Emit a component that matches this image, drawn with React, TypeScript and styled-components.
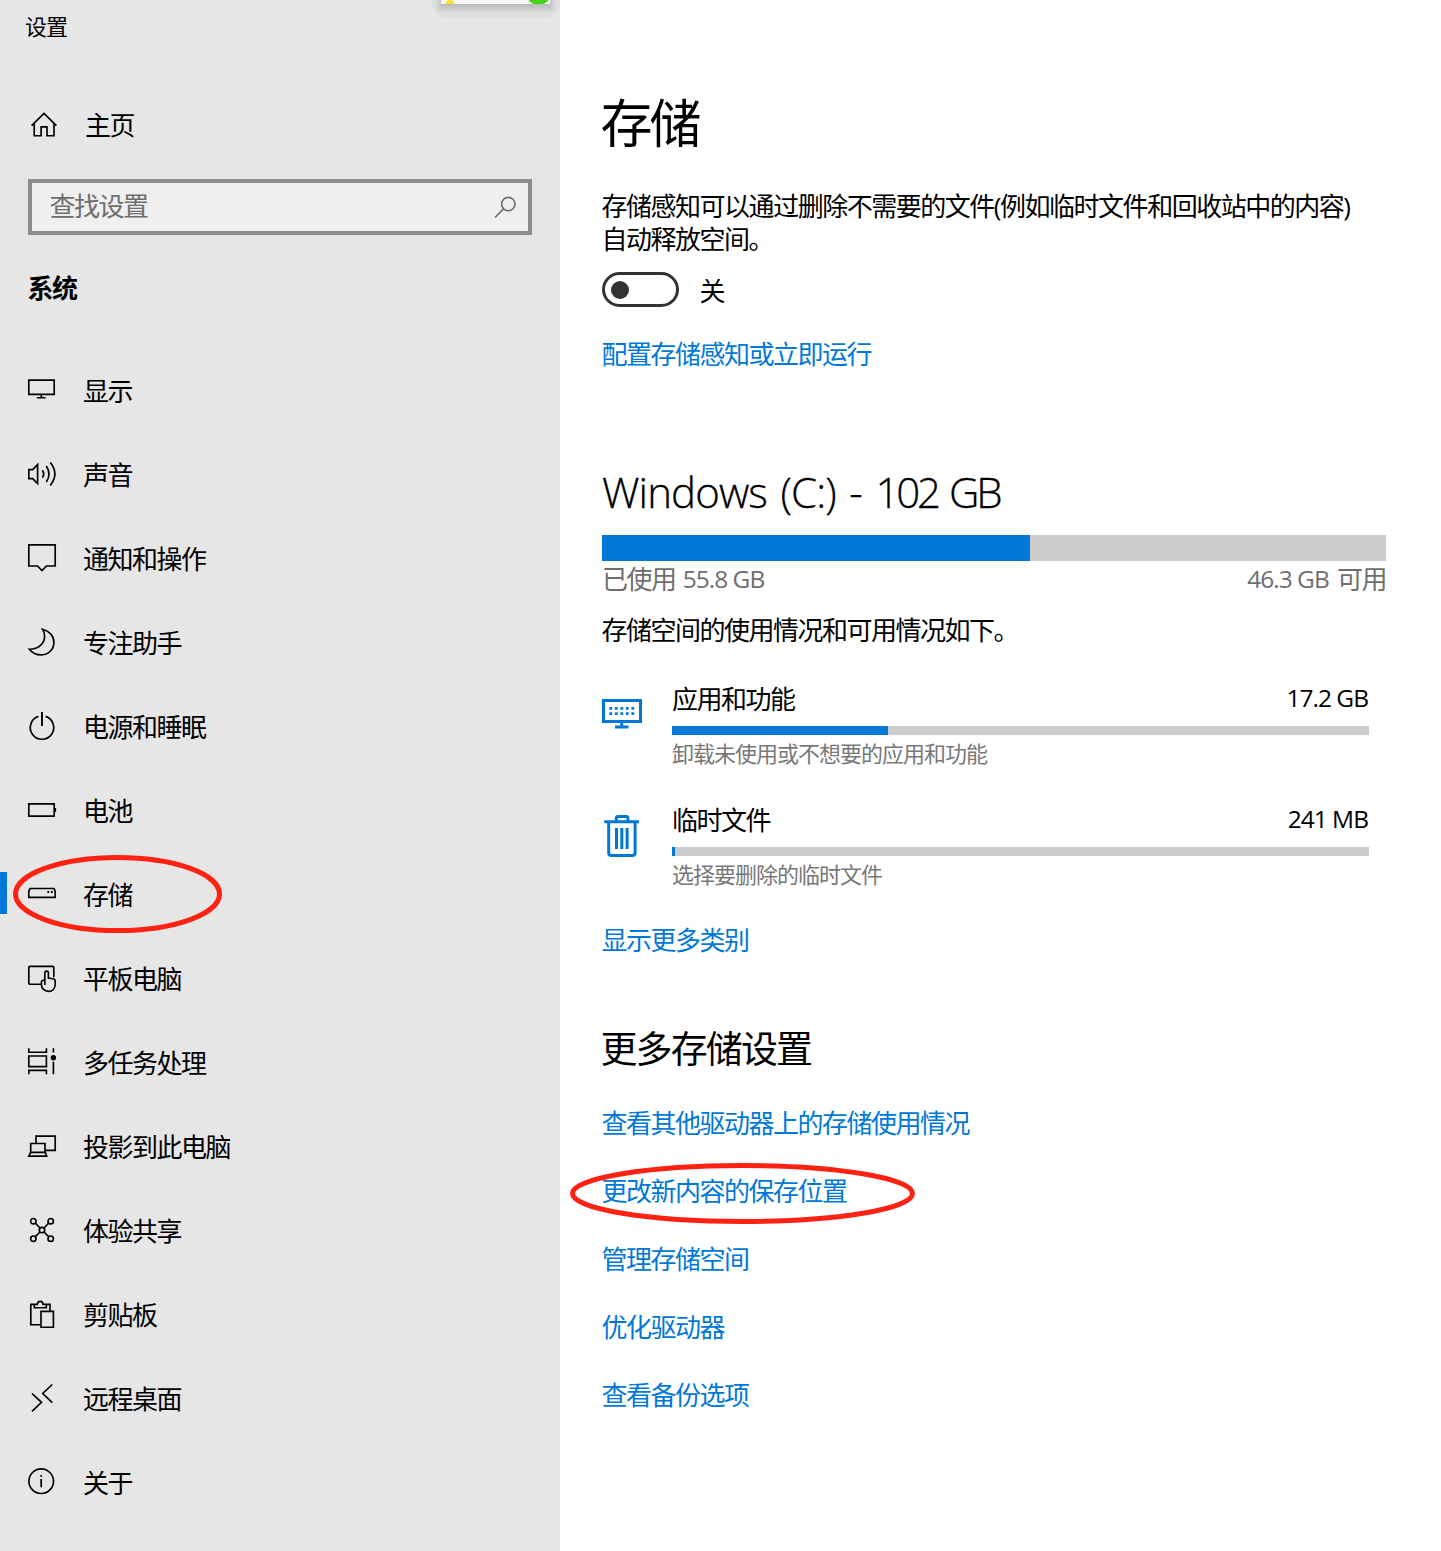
import React from "react";
import styled, { createGlobalStyle } from "styled-components";

const ACCENT = "#0078d7";
const MARK = "#ff2112";

const GlobalStyle = createGlobalStyle`
  *, *::before, *::after { box-sizing: border-box; }
  body {
    margin: 0;
    background: #fff;
    color: #000;
    font-family: "Open Sans", "Noto Sans CJK SC", sans-serif;
    -webkit-font-smoothing: antialiased;
  }
`;

/* ---------- shared text ---------- */

const Text = styled.span<{ $tone?: string }>`
  display: block;
  font-size: 26px;
  line-height: 34px;
  letter-spacing: -1.5px;
  white-space: nowrap;
  color: ${(p) => p.$tone ?? "#000"};
`;

const Latin = styled.span<{ $before?: number; $after?: number; $raise?: number }>`
  margin: 0 ${(p) => p.$after ?? 0}px 0 ${(p) => p.$before ?? 0}px;
  font-size: 24.5px;
  line-height: 1;
  letter-spacing: -1px;
  vertical-align: ${(p) => p.$raise ?? 1}px;
`;

/* ---------- layout ---------- */

const Page = styled.div`
  position: relative;
  display: grid;
  grid-template-columns: 560px 1fr;
  width: 1441px;
  height: 1551px;
  overflow: hidden;
`;

const Sidebar = styled.aside`
  position: relative;
  display: flex;
  flex-direction: column;
  background: #e6e6e6;
  overflow: hidden;
`;

const WindowTitle = styled.div`
  padding: 11px 0 0 25px;
  font-size: 22px;
  line-height: 30px;
  letter-spacing: -1px;
`;

const HomeRow = styled.div`
  display: flex;
  align-items: center;
  gap: 27px;
  height: 56px;
  margin-top: 56px;
  padding-left: 30px;
`;

const SearchBox = styled.div`
  display: flex;
  align-items: center;
  justify-content: space-between;
  width: 504px;
  height: 56px;
  margin: 26px 0 0 28px;
  padding: 0 10px 0 17.5px;
  background: #efefef;
  border: 4px solid #8e8e8e;

  span { padding-bottom: 2px; }
`;

const GroupTitle = styled.h2`
  margin: 36px 0 44px 27.5px;
  font-size: 26px;
  line-height: 34px;
  letter-spacing: -1.5px;
  font-weight: 700;
`;

const Nav = styled.nav`
  display: flex;
  flex-direction: column;
`;

const NavRow = styled.div`
  display: flex;
  align-items: center;
  height: 84px;
`;

const Marker = styled.i<{ $on: boolean }>`
  width: 7px;
  height: 42px;
  margin: 0 21px 4px 0;
  background: ${(p) => (p.$on ? ACCENT : "transparent")};
`;

const IconSvg = styled.svg`
  flex: none;
  fill: none;
  stroke: #000;
  stroke-width: 1.65;
  overflow: visible;
`;

const NavIcon = styled(IconSvg)`
  margin: 0 27px 2px 0;
`;

/* ---------- preview window peeking in from the top edge ---------- */

const PeekShade = styled.div`
  position: absolute;
  top: -22px;
  left: 431px;
  width: 130px;
  height: 40px;
  padding: 0 11px 14px 10px;
  border-radius: 0 0 18px 18px;
  background: #dedede;
`;

const Peek = styled.div`
  position: relative;
  height: 26px;
  background: #f6f6f4;
  box-shadow: 0 1px 1px #b8b8b8, 0 3px 4px 3px rgba(0, 0, 0, 0.12);
`;

const PeekArt = styled.svg`
  position: absolute;
  left: 0;
  bottom: 0;
`;

/* ---------- content ---------- */

const Content = styled.main`
  display: flex;
  flex-direction: column;
  align-items: flex-start;
  padding-left: 42px;
`;

const PageTitle = styled.h1`
  margin: 90px 0 0 -1.5px;
  font-size: 52px;
  line-height: 66px;
  letter-spacing: -3px;
  font-weight: 400;
`;

const Description = styled.p`
  margin: 34px 0 0 -0.5px;
  font-size: 26px;
  line-height: 33px;
  letter-spacing: -1.48px;
  white-space: nowrap;
`;

const ToggleRow = styled.div`
  display: flex;
  align-items: center;
  gap: 20.5px;
  margin-top: 16px;
  height: 35px;

  > span { padding-top: 2px; }
`;

const Toggle = styled.div`
  display: flex;
  align-items: center;
  width: 77px;
  height: 35px;
  padding-left: 6px;
  border: 3.5px solid #333;
  border-radius: 18px;
`;

const Knob = styled.i`
  width: 18px;
  height: 18px;
  border-radius: 50%;
  background: #333;
`;

const LinkText = styled.a<{ $top: number }>`
  display: block;
  margin: ${(p) => p.$top}px 0 0 -0.5px;
  font-size: 26px;
  line-height: 34px;
  letter-spacing: -1.5px;
  white-space: nowrap;
  color: ${ACCENT};
`;

const DriveTitle = styled.h2`
  margin: 92px 0 0;
  font-size: 42px;
  line-height: 58px;
  font-weight: 300;
  letter-spacing: -0.9px;
  word-spacing: 3.5px;
  white-space: nowrap;
  -webkit-text-stroke: 0.3px #000;
`;

const DriveSize = styled.span`
  letter-spacing: -3.2px;
`;

const Track = styled.div<{ $h: number; $w: number }>`
  width: ${(p) => p.$w}px;
  height: ${(p) => p.$h}px;
  background: #ccc;
`;

const Fill = styled.div`
  height: 100%;
  background: ${ACCENT};
`;

const Between = styled.div<{ $w: number }>`
  display: flex;
  justify-content: space-between;
  width: ${(p) => p.$w}px;
`;

const UsageLine = styled(Between)`
  padding-top: 1px;
`;

const UsageNote = styled.div`
  margin: 17px 0 34px -0.5px;
`;

const Category = styled.div`
  display: grid;
  grid-template-columns: 70px 697px;
  height: 121px;
`;

const CategoryIcon = styled.div<{ $top: number }>`
  padding-top: ${(p) => p.$top}px;
  svg { display: block; stroke: ${ACCENT}; stroke-width: 3; }
`;

const CategoryBody = styled.div`
  display: flex;
  flex-direction: column;
  gap: 10px;
  padding-top: 1px;
`;

const Hint = styled.div`
  margin-top: -6px;
  font-size: 22px;
  line-height: 28px;
  letter-spacing: -1px;
  color: #787878;
`;

const SectionTitle = styled.h2`
  margin: 68px 0 0 -1.5px;
  font-size: 37px;
  line-height: 48px;
  letter-spacing: -1.9px;
  font-weight: 400;
`;

/* ---------- hand-drawn red rings ---------- */

const Ring = styled.svg<{ $x: number; $y: number }>`
  position: absolute;
  left: ${(p) => p.$x}px;
  top: ${(p) => p.$y}px;
  fill: none;
  stroke: ${MARK};
  stroke-width: 5;
`;

/* ---------- data ---------- */

const navItems: { label: string; icon: React.ReactNode; active?: boolean }[] = [
  {
    label: "显示",
    icon: <path d="M.8 4.1h25.4v14.2H.8zM13.3 18.5v3M8.8 21.7h8.8" />,
  },
  {
    label: "声音",
    icon: (
      <path d="M.8 9.6h3.8l5-5v19l-5-5H.8zM14.4 10.2q2.6 3.8 0 7.6M18.3 6q5.4 8 0 16M22.3 2.6q9.2 11.4 0 22.8" />
    ),
  },
  {
    label: "通知和操作",
    icon: <path d="M.8.8h26.4v21.2h-8.7L14 26.6 9.5 22H.8z" />,
  },
  {
    label: "专注助手",
    icon: (
      <path d="M14.6 1.2C21.4 2.8 25.9 8.2 25.9 14.4A12.5 12.5 0 0 1 13.3 26.9C8.3 26.9 4 24.7 1.3 21.2 10 21.4 16.6 15.8 16.6 8.4 16.6 5.6 16 3.2 14.6 1.2z" />
    ),
  },
  {
    label: "电源和睡眠",
    icon: (
      <>
        <path d="M10.4 4.4A11.7 11.7 0 1 0 17.6 4.4" />
        <path d="M14 0v14" strokeWidth="1.9" />
      </>
    ),
  },
  {
    label: "电池",
    icon: (
      <>
        <path d="M.8 7.9h25.4v12.2H.8z" />
        <path d="M27.2 12v4" strokeWidth="1.8" />
      </>
    ),
  },
  {
    label: "存储",
    active: true,
    icon: (
      <>
        <path d="M2 8.5h24l1.2 2.6v6.3H.8v-6.3z" />
        <path d="M19.4 12h1.8M23 12h1.8" strokeWidth="1.8" />
      </>
    ),
  },
  {
    label: "平板电脑",
    icon: (
      <path d="M12.6 20.2H2Q.8 20.2.8 19V3.6Q.8 2.4 2 2.4h22.6q1.2 0 1.2 1.2v9.6M16.8 21V9q0-1.9 1.8-1.9T20.4 9v5l4.6.7q2.2.4 2.2 2.6V20.2c0 4.2-2.6 7.2-6.6 7.2s-7.2-2.8-7.2-7v-2.2q0-2 3.4-2.4" />
    ),
  },
  {
    label: "多任务处理",
    icon: (
      <>
        <path d="M.8.3V4.2H18.4V.3M.8 8h17.6v10.6H.8zM.8 26.3V22.4H18.4v3.9M25.4.3V4.6M25.4 13.8v12.5" />
        <circle cx="25.4" cy="9.7" r="2.7" fill="#000" stroke="none" />
      </>
    ),
  },
  {
    label: "投影到此电脑",
    icon: (
      <path d="M8 10.8V4.1h19.2v14.3H17.4M2.7 20V11.5h14.3V20M2.6 20.3h14.7l1.4 3.8H.8z" />
    ),
  },
  {
    label: "体验共享",
    icon: (
      <>
        <circle cx="5.3" cy="5.2" r="2.7" />
        <circle cx="22.7" cy="5.2" r="2.7" />
        <circle cx="14" cy="14" r="2.7" />
        <circle cx="5.3" cy="22.7" r="2.7" />
        <circle cx="22.7" cy="22.7" r="2.7" />
        <path d="M7.3 7.2l4.7 4.8M20.7 7.2L16 12M7.3 20.7L12 16M20.7 20.7L16 16" />
      </>
    ),
  },
  {
    label: "剪贴板",
    icon: (
      <path d="M6 4.4H2.8v20.3H12M18.6 4.4h3.4v6M6.3 4.3v3.4h12V4.3h-3.2q-.3-3-2.9-3T9.3 4.3zM13 11.3h12.4v15.9H13z" />
    ),
  },
  {
    label: "远程桌面",
    icon: <path d="M24.3.5L14.7 9.5 24.3 18.7M4 9.5L13.5 18.3 4 27.3" />,
  },
  {
    label: "关于",
    icon: (
      <>
        <circle cx="13.2" cy="13.2" r="12.3" />
        <path d="M13.2 11v8.2M13.2 7v1.8" strokeWidth="1.7" />
      </>
    ),
  },
];

const categories = [
  {
    label: "应用和功能",
    size: "17.2 GB",
    fill: 216,
    hint: "卸载未使用或不想要的应用和功能",
    top: 18,
    icon: (
      <IconSvg width="40" height="30" viewBox="0 0 40 30">
        <path d="M1.5 1.5h37v21h-37zM19.7 23v4M13 28h13.5" />
        <path
          d="M7.4 9.4h25.5M7.4 14.6h25.5"
          style={{ strokeWidth: 2.8, strokeDasharray: "2.8 2.7" }}
        />
      </IconSvg>
    ),
  },
  {
    label: "临时文件",
    size: "241 MB",
    fill: 3,
    hint: "选择要删除的临时文件",
    top: 13,
    icon: (
      <IconSvg width="40" height="42" viewBox="0 0 40 42">
        <path d="M2.3 6.7h34.7M14.3 6V3.2q0-1.7 1.7-1.7h8.2q1.7 0 1.7 1.7V6M6.7 7v30.8q0 2.7 2.7 2.7h21q2.7 0 2.7-2.7V7M14.5 13v21M19.8 13v21M25.1 13v21" />
      </IconSvg>
    ),
  },
];

const moreLinks = ["查看其他驱动器上的存储使用情况", "更改新内容的保存位置", "管理存储空间", "优化驱动器", "查看备份选项"];

/* ---------- app ---------- */

export default function App() {
  return (
    <>
      <GlobalStyle />
      <Page>
        <Sidebar>
          <PeekShade>
            <Peek>
              <PeekArt width="108" height="4" viewBox="0 0 108 4">
                <ellipse cx="9" cy="4" rx="4.5" ry="4" fill="#fbe32a" />
                <rect x="87" y="-12" width="21" height="16" rx="7" fill="#45d321" />
              </PeekArt>
            </Peek>
          </PeekShade>
          <WindowTitle>设置</WindowTitle>
          <HomeRow>
            <IconSvg width="28" height="28" viewBox="0 0 28 28">
              <path d="M1.6 14.6L14 2.4 26.4 14.6M4.2 12.5v12.2h6.9v-8.8h5.9v8.8h7V12.5" />
            </IconSvg>
            <Text>主页</Text>
          </HomeRow>
          <SearchBox>
            <Text $tone="#6e6e6e">查找设置</Text>
            <IconSvg width="24" height="24" viewBox="0 0 24 24" style={{ stroke: "#6e6e6e" }}>
              <circle cx="14.3" cy="9" r="6.7" />
              <path d="M9.5 13.8L1 22.5" />
            </IconSvg>
          </SearchBox>
          <GroupTitle>系统</GroupTitle>
          <Nav>
            {navItems.map((item) => (
              <NavRow key={item.label}>
                <Marker $on={!!item.active} />
                <NavIcon width="28" height="28" viewBox="0 0 28 28">
                  {item.icon}
                </NavIcon>
                <Text>{item.label}</Text>
              </NavRow>
            ))}
          </Nav>
        </Sidebar>

        <Content>
          <PageTitle>存储</PageTitle>
          <Description>
            存储感知可以通过删除不需要的文件(例如临时文件和回收站中的内容)
            <br />
            自动释放空间。
          </Description>
          <ToggleRow>
            <Toggle>
              <Knob />
            </Toggle>
            <Text>关</Text>
          </ToggleRow>
          <LinkText $top={30}>配置存储感知或立即运行</LinkText>

          <DriveTitle>
            Windows (C:) - <DriveSize>102 GB</DriveSize>
          </DriveTitle>
          <Track $w={784} $h={26} style={{ marginTop: 14 }}>
            <Fill style={{ width: 428 }} />
          </Track>
          <UsageLine $w={784}>
            <Text $tone="#6e6e6e">
              已使用 <Latin $before={2}>55.8 GB</Latin>
            </Text>
            <Text $tone="#6e6e6e">
              <Latin $after={3}>46.3 GB</Latin> 可用
            </Text>
          </UsageLine>
          <UsageNote>
            <Text>存储空间的使用情况和可用情况如下。</Text>
          </UsageNote>

          {categories.map((c) => (
            <Category key={c.label}>
              <CategoryIcon $top={c.top}>{c.icon}</CategoryIcon>
              <CategoryBody>
                <Between $w={697}>
                  <Text>{c.label}</Text>
                  <Text>
                    <Latin $after={1} $raise={2}>
                      {c.size}
                    </Latin>
                  </Text>
                </Between>
                <Track $w={697} $h={9}>
                  <Fill style={{ width: c.fill }} />
                </Track>
                <Hint>{c.hint}</Hint>
              </CategoryBody>
            </Category>
          ))}
          <LinkText $top={0}>显示更多类别</LinkText>

          <SectionTitle>更多存储设置</SectionTitle>
          {moreLinks.map((label, i) => (
            <LinkText key={label} $top={i === 0 ? 33 : 34}>
              {label}
            </LinkText>
          ))}
        </Content>

        <Ring $x={13} $y={855} width="209" height="78" viewBox="0 0 209 78">
          <ellipse cx="104.5" cy="39" rx="102" ry="36.5" />
        </Ring>
        <Ring $x={570} $y={1163} width="345" height="61" viewBox="0 0 345 61">
          <ellipse cx="172.5" cy="30.5" rx="170" ry="28" />
        </Ring>
      </Page>
    </>
  );
}
